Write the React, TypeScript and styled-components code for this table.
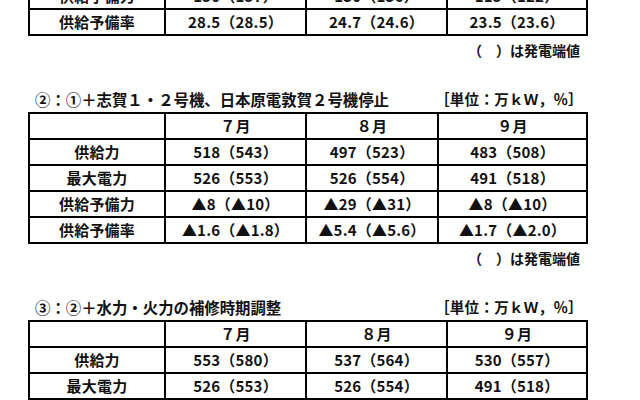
import styled, { createGlobalStyle } from 'styled-components';

const GlobalStyle = createGlobalStyle`
  html, body {
    margin: 0;
    padding: 0;
    background: #fff;
  }
  body {
    font-family: "Noto Sans CJK JP", "Noto Sans", sans-serif;
    color: #111;
  }
`;

const Page = styled.main`
  width: 558px;
  padding-left: 28px;
  margin-top: -96px;
  display: flex;
  flex-direction: column;
`;

const Section = styled.section`
  display: flex;
  flex-direction: column;
`;

const TitleBar = styled.div`
  height: 20px;
  margin-top: 29px;
  margin-bottom: 3px;
  padding: 0 3px 0 7px;
  display: flex;
  align-items: center;
  justify-content: space-between;
`;

const Title = styled.h2`
  margin: 0;
  font-size: 15.4px;
  font-weight: 700;
  line-height: 20px;
`;

const Unit = styled.span`
  font-size: 14.5px;
  font-weight: 700;
  line-height: 20px;
  letter-spacing: 0.3px;
`;

const Grid = styled.table`
  width: 100%;
  border-collapse: collapse;
  table-layout: fixed;
  border: 2px solid #000;
`;

const Col = styled.col<{ $w: number }>`
  width: ${(p) => p.$w}px;
`;

const Row = styled.tr`
  height: 26px;
`;

const Cell = styled.td`
  box-sizing: border-box;
  height: 26px;
  padding: 0;
  border: 2px solid #000;
  text-align: center;
  font-size: 15px;
  font-weight: 700;
  line-height: 22px;
  letter-spacing: 0.2px;
  white-space: nowrap;
`;

const Note = styled.p`
  margin: 4px 0 0;
  height: 20px;
  padding-right: 6px;
  text-align: right;
  font-size: 14px;
  font-weight: 700;
  line-height: 20px;
`;

type TableData = {
  title?: string;
  cols: number[];
  rows: string[][];
  note?: boolean;
};

const tables: TableData[] = [
  {
    cols: [136, 141, 141, 140],
    rows: [
      ['', '７月', '８月', '９月'],
      ['供給力', '676（710）', '656（690）', '606（640）'],
      ['最大電力', '526（553）', '526（554）', '491（518）'],
      ['供給予備力', '150（157）', '130（136）', '115（122）'],
      ['供給予備率', '28.5（28.5）', '24.7（24.6）', '23.5（23.6）'],
    ],
    note: true,
  },
  {
    title: '②：①＋志賀１・２号機、日本原電敦賀２号機停止',
    cols: [136, 141, 132, 149],
    rows: [
      ['', '７月', '８月', '９月'],
      ['供給力', '518（543）', '497（523）', '483（508）'],
      ['最大電力', '526（553）', '526（554）', '491（518）'],
      ['供給予備力', '▲8（▲10）', '▲29（▲31）', '▲8（▲10）'],
      ['供給予備率', '▲1.6（▲1.8）', '▲5.4（▲5.6）', '▲1.7（▲2.0）'],
    ],
    note: true,
  },
  {
    title: '③：②＋水力・火力の補修時期調整',
    cols: [136, 141, 141, 140],
    rows: [
      ['', '７月', '８月', '９月'],
      ['供給力', '553（580）', '537（564）', '530（557）'],
      ['最大電力', '526（553）', '526（554）', '491（518）'],
      ['供給予備力', '27（27）', '11（10）', '39（39）'],
      ['供給予備率', '5.1（4.9）', '2.1（1.8）', '7.9（7.5）'],
    ],
  },
];

function SupplyTable({ title, cols, rows, note }: TableData) {
  return (
    <Section>
      {title && (
        <TitleBar>
          <Title>{title}</Title>
          <Unit>［単位：万ｋＷ，％］</Unit>
        </TitleBar>
      )}
      <Grid>
        <colgroup>
          {cols.map((w, i) => (
            <Col key={i} $w={w} />
          ))}
        </colgroup>
        <tbody>
          {rows.map((r, i) => (
            <Row key={i}>
              {r.map((c, j) => (
                <Cell key={j}>{c}</Cell>
              ))}
            </Row>
          ))}
        </tbody>
      </Grid>
      {note && <Note>（　）は発電端値</Note>}
    </Section>
  );
}

export default function App() {
  return (
    <>
      <GlobalStyle />
      <Page>
        {tables.map((t, i) => (
          <SupplyTable key={i} {...t} />
        ))}
      </Page>
    </>
  );
}
